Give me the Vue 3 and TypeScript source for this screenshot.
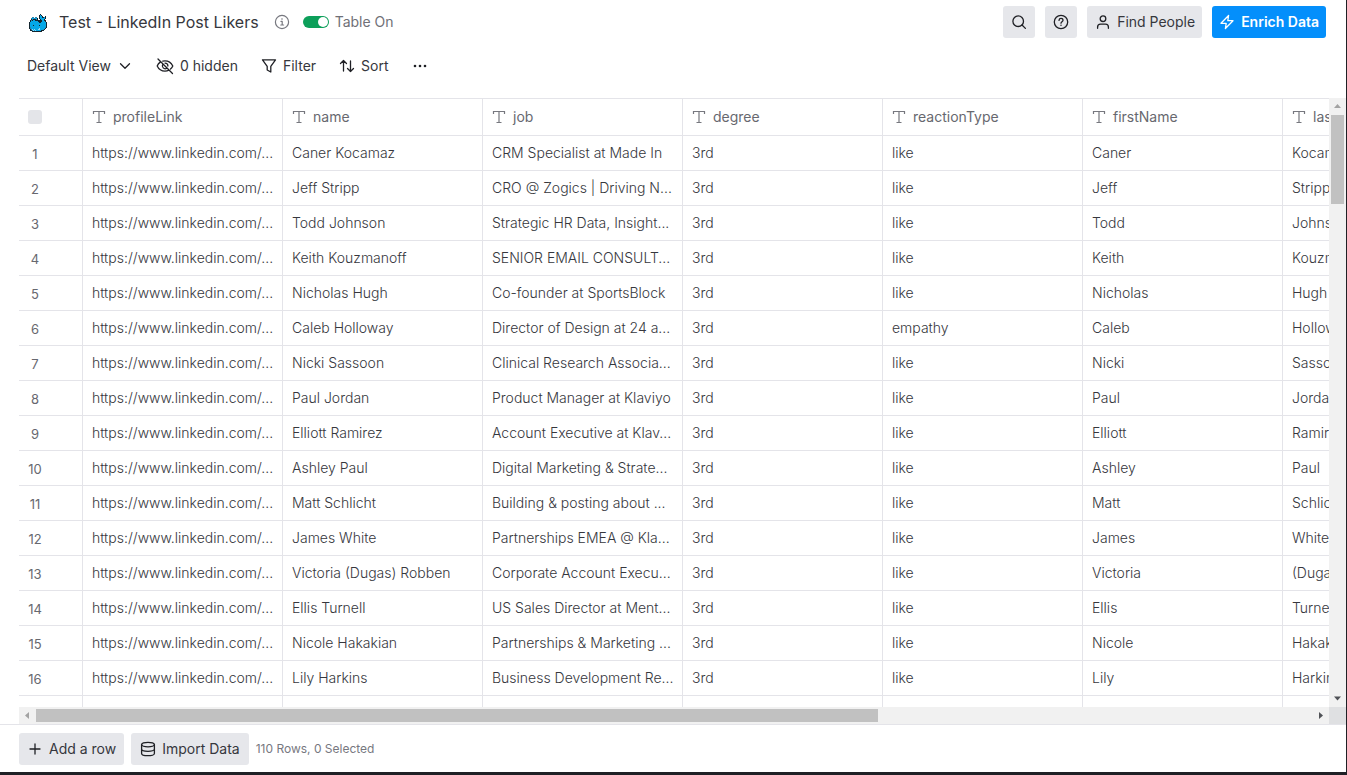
<script setup lang="ts">
import { ref } from 'vue'

interface Row {
  name: string
  job: string
  reaction: string
  first: string
  last: string
}

const columns: string[] = ['profileLink', 'name', 'job', 'degree', 'reactionType', 'firstName', 'lastName']
const link = 'https://www.linkedin.com/...'
const tableOn = ref(true)
const allSelected = ref(false)

const make = (name: string, job: string, first: string, last: string, reaction = 'like'): Row => ({
  name,
  job,
  reaction,
  first,
  last,
})

const rows: Row[] = [
  make('Caner Kocamaz', 'CRM Specialist at Made In', 'Caner', 'Kocamaz'),
  make('Jeff Stripp', 'CRO @ Zogics | Driving N...', 'Jeff', 'Stripp'),
  make('Todd Johnson', 'Strategic HR Data, Insight...', 'Todd', 'Johnson'),
  make('Keith Kouzmanoff', 'SENIOR EMAIL CONSULT...', 'Keith', 'Kouzmanoff'),
  make('Nicholas Hugh', 'Co-founder at SportsBlock', 'Nicholas', 'Hugh'),
  make('Caleb Holloway', 'Director of Design at 24 a...', 'Caleb', 'Holloway', 'empathy'),
  make('Nicki Sassoon', 'Clinical Research Associa...', 'Nicki', 'Sassoon'),
  make('Paul Jordan', 'Product Manager at Klaviyo', 'Paul', 'Jordan'),
  make('Elliott Ramirez', 'Account Executive at Klav...', 'Elliott', 'Ramirez'),
  make('Ashley Paul', 'Digital Marketing & Strate...', 'Ashley', 'Paul'),
  make('Matt Schlicht', 'Building & posting about ...', 'Matt', 'Schlicht'),
  make('James White', 'Partnerships EMEA @ Kla...', 'James', 'White'),
  make('Victoria (Dugas) Robben', 'Corporate Account Execu...', 'Victoria', '(Dugas) Robben'),
  make('Ellis Turnell', 'US Sales Director at Ment...', 'Ellis', 'Turnell'),
  make('Nicole Hakakian', 'Partnerships & Marketing ...', 'Nicole', 'Hakakian'),
  make('Lily Harkins', 'Business Development Re...', 'Lily', 'Harkins'),
]

// Pixel whale: k outline, b body, d shade, w highlight
const whale: string[] = [
  '...........k......',
  '..........kbk.....',
  '..........kbbk..k.',
  '...dd.dd..kbbkkbk.',
  '..dbbdbbk.kbbbbbk.',
  '..kdkkkdk..kbbbk..',
  '.kdkbbkkkkkkkbbkk.',
  '.kbbbbbbbkkkkbbbk.',
  'kbbbbbbbbbkkbbbbbk',
  'kbbbbbbbbbbbbbbbbk',
  'kbbbbbbbbbbbbbbbbk',
  'kbbbkbbbbbkbbbbbbk',
  'kbbbbbbbbbbbbbbbbk',
  'kdbbbbbbbbbbbbbbdk',
  'kdbbbbbbbbwbbbbbk.',
  '.kdwbwbbbwwbbbdk..',
  '.kkdwbwbbbbbkkk...',
  '...kkkkkkkkkk.....',
]
const ink: Record<string, string> = { k: '#14252f', b: '#05a7e6', d: '#2b83ad', w: '#8fd8f5' }
const pixels = whale.flatMap((line, y) =>
  [...line].map((c, x) => ({ x, y, fill: ink[c] ?? '' })).filter((p) => p.fill !== ''),
)
</script>

<template>
  <div class="app">
    <header class="top">
      <svg class="logo" viewBox="0 0 18 18" width="18" height="18" shape-rendering="crispEdges" aria-hidden="true">
        <rect v-for="p in pixels" :key="`${p.x}-${p.y}`" :x="p.x" :y="p.y" width="1" height="1" :fill="p.fill" />
      </svg>
      <h1>Test - LinkedIn Post Likers</h1>
      <svg class="icon info" viewBox="0 0 16 16" width="16" height="16">
        <circle cx="8" cy="8" r="6.6" />
        <path d="M7 7.4h1.2v3.6M6.8 11h2.8" />
        <circle class="dot" cx="8" cy="5" r=".8" />
      </svg>
      <label class="switch">
        <input v-model="tableOn" type="checkbox" role="switch" />
        <span>Table On</span>
      </label>
      <div class="actions">
        <button class="btn square" type="button" aria-label="Search">
          <svg class="icon" viewBox="0 0 16 16" width="16" height="16"><circle cx="7.2" cy="7.2" r="5.3" /><path d="M11 11l3.4 3.4" /></svg>
        </button>
        <button class="btn square" type="button" aria-label="Help">
          <svg class="icon" viewBox="0 0 16 16" width="16" height="16"><circle cx="8" cy="8" r="6.7" /><path d="M6 6.3C6.200 4.900 7 4.400 8 4.400s2 .700 2 1.800c0 1.500-2 1.500-2 3" /><circle class="dot" cx="8" cy="11.300" r=".8" /></svg>
        </button>
        <button class="btn person" type="button">
          <svg class="icon" viewBox="0 0 16 16" width="16" height="16"><circle cx="8" cy="4.700" r="2.800" /><path d="M2.600 14.300v-1.300c0-1.800 1.200-2.900 2.900-2.900h5c1.700 0 2.900 1.100 2.900 2.900v1.300" /></svg>
          Find People
        </button>
        <button class="btn primary" type="button">
          <svg class="icon" viewBox="0 0 16 16" width="16" height="16"><path d="M9.600 1.500 2 9.300h5.200L6.400 14.500 14 6.700H8.800z" /></svg>
          Enrich Data
        </button>
      </div>
    </header>

    <nav class="tools" aria-label="View options">
      <button type="button" class="tool">
        Default View
        <svg class="icon" viewBox="0 0 16 16" width="16" height="16"><path d="M3.500 5.800 8 10.300l4.500-4.500" /></svg>
      </button>
      <button type="button" class="tool">
        <svg class="icon" viewBox="0 0 18 18" width="18" height="18">
          <path d="M2 2l14.500 14.500M6.800 4.200C7.500 4 8.200 3.900 9 3.900c3.700 0 6.500 2.500 7.800 5.100-.5 1.100-1.300 2.100-2.300 3M4.300 5.100C2.900 6.100 1.800 7.500 1.200 9c1.300 2.800 4.100 5.100 7.800 5.100 1.400 0 2.700-.300 3.800-.9M6.800 7.300A2.900 2.900 0 0 0 10.800 11.300M9 6.100A2.900 2.900 0 0 1 11.900 9" />
        </svg>
        0 hidden
      </button>
      <button type="button" class="tool">
        <svg class="icon" viewBox="0 0 16 16" width="16" height="16"><path d="M1.500 1.800h13L9.800 8.300V14L6.200 12V8.300z" /></svg>
        Filter
      </button>
      <button type="button" class="tool">
        <svg class="icon" viewBox="0 0 16 16" width="16" height="16"><path d="M4.500 13V2.500M1.500 5.500l3-3 3 3M11.500 3V13.500M8.500 10.500l3 3 3-3" /></svg>
        Sort
      </button>
      <button type="button" class="tool" aria-label="More options">
        <svg class="icon more" viewBox="0 0 16 16" width="16" height="16"><circle cx="3" cy="8" r="1.300" /><circle cx="8" cy="8" r="1.300" /><circle cx="13" cy="8" r="1.300" /></svg>
      </button>
    </nav>

    <main class="grid">
      <div class="viewport">
        <table>
          <colgroup>
            <col class="c-num" />
            <col v-for="c in columns" :key="c" class="c-data" />
          </colgroup>
          <thead>
            <tr>
              <th class="num"><input v-model="allSelected" type="checkbox" aria-label="Select all rows" /></th>
              <th v-for="c in columns" :key="c" scope="col">
                <div class="head">
                  <svg viewBox="0 0 14 14" width="14" height="14"><path d="M1.500 4V1.500h11V4M7 1.500v11M4.500 12.500h5" /></svg>
                  {{ c }}
                </div>
              </th>
            </tr>
          </thead>
          <tbody>
            <tr v-for="(r, i) in rows" :key="i">
              <td class="num">{{ i + 1 }}</td>
              <td>{{ link }}</td>
              <td>{{ r.name }}</td>
              <td>{{ r.job }}</td>
              <td>3rd</td>
              <td>{{ r.reaction }}</td>
              <td>{{ r.first }}</td>
              <td>{{ r.last }}</td>
            </tr>
            <tr>
              <td class="num"></td>
              <td v-for="c in columns" :key="c"></td>
            </tr>
          </tbody>
        </table>
      </div>
      <div class="bar vertical" aria-hidden="true">
        <svg class="pale" viewBox="0 0 17 17" width="17" height="17"><path d="M8.500 6 12 10H5z" /></svg>
        <div class="track"><div class="thumb"></div></div>
        <svg viewBox="0 0 17 17" width="17" height="17"><path d="M5 6.500h7l-3.500 4z" /></svg>
      </div>
      <div class="bar horizontal" aria-hidden="true">
        <svg class="pale" viewBox="0 0 17 17" width="17" height="17"><path d="M6 8.500 10 5v7z" /></svg>
        <div class="track"><div class="thumb"></div></div>
        <svg viewBox="0 0 17 17" width="17" height="17"><path d="M7 5l4 3.500L7 12z" /></svg>
      </div>
      <div class="corner"></div>
    </main>

    <footer>
      <button class="btn" type="button">
        <svg class="icon" viewBox="0 0 16 16" width="16" height="16"><path d="M8 3v10M3 8h10" /></svg>
        Add a row
      </button>
      <button class="btn import" type="button">
        <svg class="icon" viewBox="0 0 16 16" width="16" height="16"><ellipse cx="8" cy="3.600" rx="6.400" ry="2.300" /><path d="M1.600 3.600v8.800c0 1.300 2.900 2.300 6.400 2.300s6.400-1 6.400-2.300V3.600M1.600 8c0 1.300 2.900 2.300 6.400 2.300s6.400-1 6.400-2.300" /></svg>
        Import Data
      </button>
      <p>110 Rows, 0 Selected</p>
    </footer>
  </div>
</template>

<style>
body {
  margin: 0;
}
</style>

<style scoped>
.app {
  box-sizing: border-box;
  height: 100vh;
  display: flex;
  flex-direction: column;
  overflow: hidden;
  border-right: 1px solid #1f2025;
  border-bottom: 3px solid #1f2025;
  background: #fff;
  color: #36373d;
  font: 14px/20px Inter, 'Liberation Sans', sans-serif;
}

button {
  border: 0;
  padding: 0;
  background: none;
  color: inherit;
  font: inherit;
  cursor: pointer;
}

.icon {
  flex: none;
  fill: none;
  stroke: #1f2025;
  stroke-width: 1.3px;
  stroke-linecap: round;
  stroke-linejoin: round;
}

.dot {
  fill: currentColor;
  stroke: none;
}

.top {
  flex: none;
  display: flex;
  align-items: center;
  height: 44px;
  padding: 0 20px 0 29px;
}

.logo {
  flex: none;
  margin-top: 2px;
}

h1 {
  margin: 0 15px 0 12px;
  font-size: 16px;
  font-weight: 400;
  white-space: nowrap;
}

.info {
  color: #77787f;
  stroke: currentColor;
  stroke-width: 1.2px;
}

.switch {
  display: flex;
  align-items: center;
  gap: 6px;
  margin-left: 13px;
  color: #6f7077;
  white-space: nowrap;
}

.switch input {
  appearance: none;
  box-sizing: border-box;
  width: 26px;
  height: 12px;
  margin: 0;
  padding: 1px;
  border-radius: 6px;
  background: #bfc1c7;
}

.switch input::before {
  content: '';
  display: block;
  width: 10px;
  height: 10px;
  border-radius: 50%;
  background: #fff;
}

.switch input:checked {
  background: #0d9f5a;
}

.switch input:checked::before {
  margin-left: auto;
}

.actions {
  display: flex;
  gap: 10px;
  margin-left: auto;
}

.btn {
  display: flex;
  align-items: center;
  justify-content: center;
  gap: 6px;
  height: 32px;
  padding: 0 8px;
  border-radius: 3px;
  background: #e6e7eb;
  white-space: nowrap;
}

.btn.square {
  width: 32px;
}

.btn.person {
  padding-right: 7px;
}

.btn.primary {
  padding: 0 7px;
  background: #048ffb;
  color: #fff;
  font-weight: 600;
}

.btn.primary .icon {
  stroke: #fff;
}

.btn.import {
  padding: 0 9px;
}

.tools {
  flex: none;
  display: flex;
  align-items: center;
  gap: 23px;
  height: 44px;
  margin-bottom: 10px;
  padding: 0 27px;
}

.tool {
  display: flex;
  align-items: center;
  gap: 6px;
  white-space: nowrap;
}

.tool .more {
  fill: #1f2025;
  stroke: none;
}

.grid {
  flex: 1;
  min-height: 0;
  display: grid;
  grid-template: minmax(0, 1fr) 17px / minmax(0, 1fr) 17px;
  padding-left: 19px;
}

.viewport {
  overflow: hidden;
  border-top: 1px solid #e4e4e9;
}

table {
  width: 1464px;
  table-layout: fixed;
  border-collapse: separate;
  border-spacing: 0;
}

.c-num {
  width: 64px;
}

.c-data {
  width: 200px;
}

th,
td {
  box-sizing: border-box;
  height: 35px;
  padding: 0 0 0 9px;
  border-right: 1px solid #e4e4e9;
  border-bottom: 1px solid #e4e4e9;
  text-align: left;
  font-weight: 300;
  white-space: nowrap;
}

th {
  height: 37px;
  color: #67686f;
  font-weight: 400;
}

td.num {
  padding: 1px 31px 0 0;
  color: #67686f;
  font-size: 13px;
  font-weight: 400;
  text-align: center;
}

.num input {
  appearance: none;
  display: block;
  width: 14px;
  height: 14px;
  margin: 0;
  border-radius: 3px;
  background: #e4e5e9;
}

.num input:checked {
  background: #0a8dfb;
}

.head {
  display: flex;
  align-items: center;
  gap: 7px;
}

.head svg {
  fill: none;
  stroke: #77787f;
  stroke-width: 1.2px;
}

.bar {
  display: flex;
  background: #f1f1f1;
  fill: #505257;
}

.bar svg {
  flex: none;
}

.bar .pale {
  fill: #a3a3a3;
}

.track {
  flex: 1;
  min-width: 0;
  min-height: 0;
}

.vertical {
  flex-direction: column;
}

.vertical .thumb {
  height: 15.5%;
  margin: 0 2px;
  background: #c1c1c1;
}

.horizontal .track {
  padding: 2px 0;
}

.horizontal .thumb {
  width: 66%;
  height: 13px;
  background: #c1c1c1;
}

.corner {
  background: #dfe0e2;
}

footer {
  flex: none;
  display: flex;
  align-items: center;
  gap: 7px;
  height: 47px;
  padding: 0 19px;
  border-top: 1px solid #e4e4e9;
}

footer p {
  margin: 0;
  color: #77787f;
  font-size: 12px;
}
</style>
